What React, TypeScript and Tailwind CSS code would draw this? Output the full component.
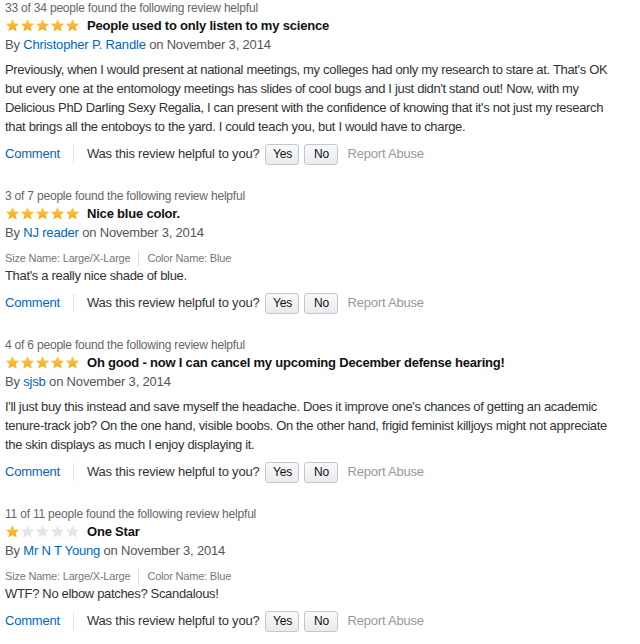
import React from 'react';

interface Review {
  helpful: string;
  rating: number;
  title: string;
  author: string;
  meta?: boolean;
  lines: string[];
}

const reviews: Review[] = [
  {
    helpful: '33 of 34 people found the following review helpful',
    rating: 5,
    title: 'People used to only listen to my science',
    author: 'Christopher P. Randle',
    lines: [
      "Previously, when I would present at national meetings, my colleges had only my research to stare at. That's OK",
      "but every one at the entomology meetings has slides of cool bugs and I just didn't stand out! Now, with my",
      "Delicious PhD Darling Sexy Regalia, I can present with the confidence of knowing that it's not just my research",
      'that brings all the entoboys to the yard. I could teach you, but I would have to charge.',
    ],
  },
  {
    helpful: '3 of 7 people found the following review helpful',
    rating: 5,
    title: 'Nice blue color.',
    author: 'NJ reader',
    meta: true,
    lines: ["That's a really nice shade of blue."],
  },
  {
    helpful: '4 of 6 people found the following review helpful',
    rating: 5,
    title: 'Oh good - now I can cancel my upcoming December defense hearing!',
    author: 'sjsb',
    lines: [
      "I'll just buy this instead and save myself the headache. Does it improve one's chances of getting an academic",
      'tenure-track job? On the one hand, visible boobs. On the other hand, frigid feminist killjoys might not appreciate',
      'the skin displays as much I enjoy displaying it.',
    ],
  },
  {
    helpful: '11 of 11 people found the following review helpful',
    rating: 1,
    title: 'One Star',
    author: 'Mr N T Young',
    meta: true,
    lines: ['WTF? No elbow patches? Scandalous!'],
  },
];

const Star = ({ filled }: { filled: boolean }) => (
  <svg viewBox="0 0 24 24" className="w-[15px] h-[15px]">
    <defs>
      <linearGradient id="sg" x1="0" y1="0" x2="0" y2="1">
        <stop offset="0" stopColor="#ffcf40" />
        <stop offset="1" stopColor="#f3a41c" />
      </linearGradient>
    </defs>
    <path
      d="M12 1.5l3.1 7.1 7.6.6-5.8 5 1.8 7.5L12 17.7l-6.7 4 1.8-7.5-5.8-5 7.6-.6z"
      fill={filled ? 'url(#sg)' : '#e6e6e6'}
    />
  </svg>
);

const Btn = ({ label }: { label: string }) => (
  <button className="h-[21px] w-[34px] rounded-[3px] border border-[#c4c7cc] bg-gradient-to-b from-[#f8f9fa] to-[#e9ebee] text-[12px] text-[#111] leading-none tracking-[-0.2px]">
    {label}
  </button>
);

export default function App() {
  return (
    <div
      className="w-[640px] h-[644px] bg-white pl-[5px] overflow-hidden"
      style={{ fontFamily: '"Liberation Sans", Arial, sans-serif' }}
    >
      {reviews.map((r, i) => (
        <div key={i} className="mb-[23px]">
          <div className="h-[16px] leading-[16px] text-[12px] tracking-[-0.2px] text-[#666]">{r.helpful}</div>
          <div className="h-[19px] flex items-center">
            <div className="flex">
              {[0, 1, 2, 3, 4].map((s) => (
                <Star key={s} filled={s < r.rating} />
              ))}
            </div>
            <span className="ml-[7px] text-[13px] font-bold tracking-[-0.2px] text-[#111]">{r.title}</span>
          </div>
          <div className="h-[19px] leading-[19px] text-[13px] tracking-[-0.18px] text-[#555]">
            By <span className="text-[#0066c0]">{r.author}</span> on November 3, 2014
          </div>
          {r.meta && (
            <div className="mt-[8px] h-[16px] flex items-center text-[11px] tracking-[-0.2px] text-[#777]">
              <span>Size Name: Large/X-Large</span>
              <span className="mx-[8px] w-px h-[15px] bg-[#ddd]" />
              <span>Color Name: Blue</span>
            </div>
          )}
          <div className={`${r.meta ? '' : 'mt-[6px]'} text-[13px] leading-[19px] tracking-[-0.33px] text-[#333]`}>
            {r.lines.map((l, j) => (
              <div key={j} className="whitespace-nowrap">{l}</div>
            ))}
          </div>
          <div className="mt-[7px] h-[22px] flex items-center text-[13px] tracking-[-0.2px]">
            <span className="text-[#0066c0]">Comment</span>
            <span className="mx-[13px] w-px h-[18px] bg-[#e3e3e3]" />
            <span className="text-[#333]">Was this review helpful to you?</span>
            <div className="ml-[6px] flex gap-[5px]">
              <Btn label="Yes" />
              <Btn label="No" />
            </div>
            <span className="ml-[9px] text-[#999]">Report Abuse</span>
          </div>
        </div>
      ))}
    </div>
  );
}
